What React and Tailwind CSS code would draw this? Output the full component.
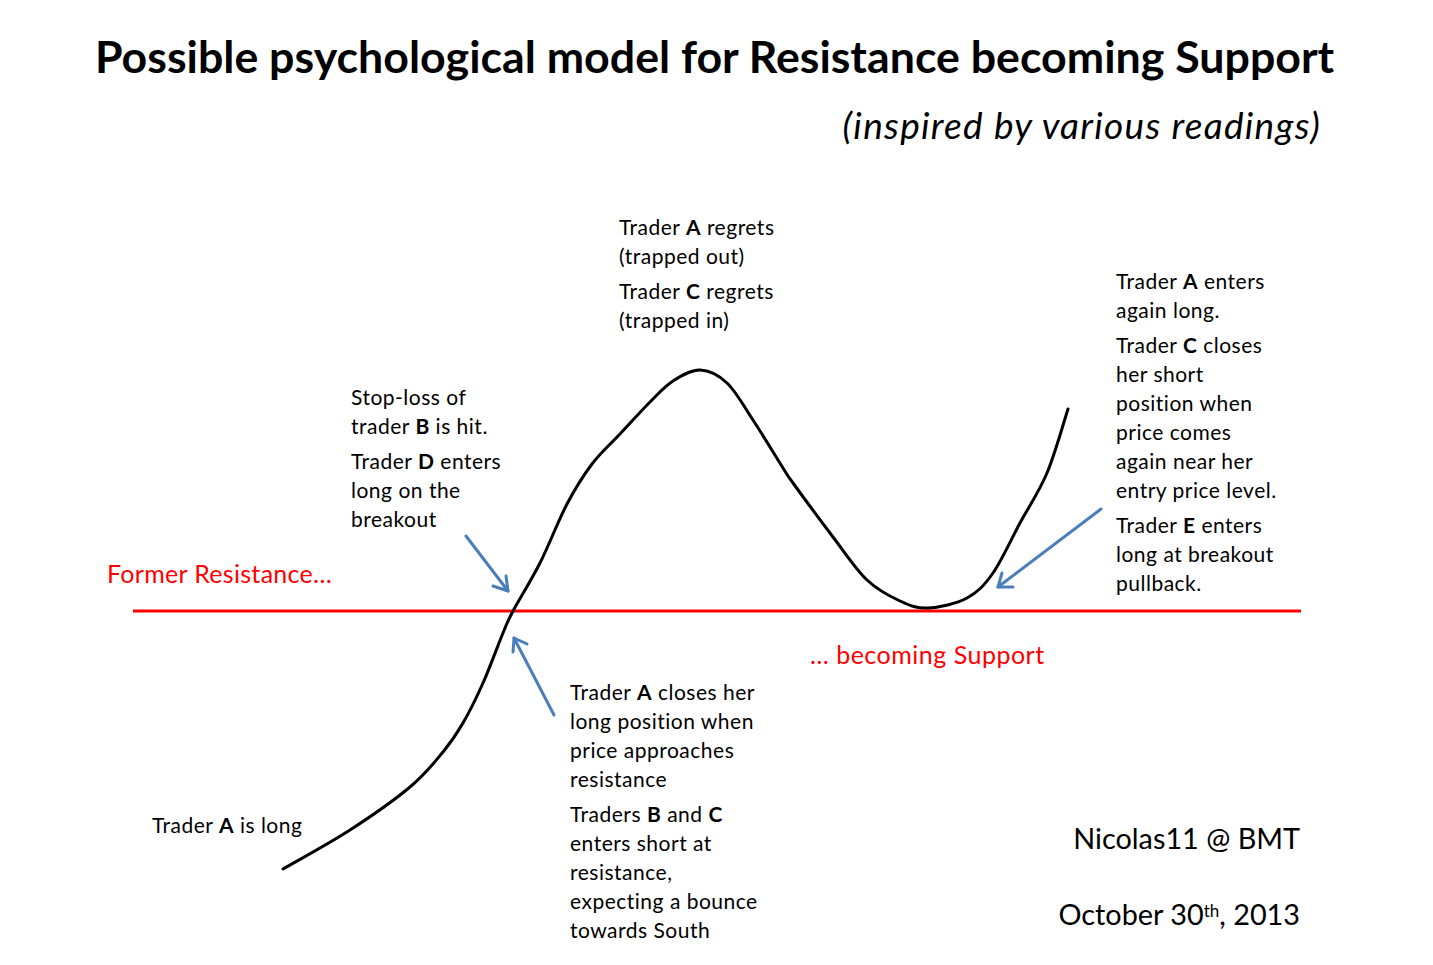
import React from "react";

const PTS = [[283,869],[350,830],[410,787],[443,752],[463,723],[483,683],[503,633],[513,611],[540,563],[567,504],[592,464],[620,434],[650,402],[673,381],[700,370],[727,383],[753,420],[783,468],[793,483],[833,537],[867,580],[900,601],[928,608],[967,598],[993,573],[1020,523],[1047,473],[1068,409]];

function smoothPath(p) {
  let d = `M${p[0][0]},${p[0][1]}`;
  for (let i = 0; i < p.length - 1; i++) {
    const p0 = p[i - 1] || p[i];
    const p1 = p[i];
    const p2 = p[i + 1];
    const p3 = p[i + 2] || p2;
    const c1x = p1[0] + (p2[0] - p0[0]) / 6;
    const c1y = p1[1] + (p2[1] - p0[1]) / 6;
    const c2x = p2[0] - (p3[0] - p1[0]) / 6;
    const c2y = p2[1] - (p3[1] - p1[1]) / 6;
    d += ` C${c1x.toFixed(1)},${c1y.toFixed(1)} ${c2x.toFixed(1)},${c2y.toFixed(1)} ${p2[0]},${p2[1]}`;
  }
  return d;
}

const B = ({ children }) => <span className="font-bold">{children}</span>;

function Block({ className, paras }) {
  return (
    <div className={`absolute flex flex-col gap-[6px] text-[21px] leading-[29px] tracking-[0.5px] text-black whitespace-nowrap ${className}`}>
      {paras.map((lines, i) => (
        <div key={i}>
          {lines.map((l, j) => (
            <div key={j}>{l}</div>
          ))}
        </div>
      ))}
    </div>
  );
}

export default function App() {
  return (
    <div className="relative w-[1433px] h-[965px] bg-white overflow-hidden font-['Lato',sans-serif] text-black">
      <div className="flex flex-col">
        <h1 className="pt-[30px] pl-[95px] text-[44.7px] leading-[52px] font-bold whitespace-nowrap">
          Possible psychological model for Resistance becoming Support
        </h1>
        <div className="pt-[20px] pr-[112px] text-right text-[37px] leading-[46px] tracking-[1.3px] italic whitespace-nowrap">
          (inspired by various readings)
        </div>
      </div>

      <svg className="absolute inset-0 pointer-events-none" width="1433" height="965" viewBox="0 0 1433 965">
        <line x1="133" y1="611" x2="1301" y2="611" stroke="#ff0000" strokeWidth="3" />
        <path d={smoothPath(PTS)} fill="none" stroke="#000" strokeWidth="3" strokeLinecap="round" />
        <g stroke="#4a7ebb" strokeWidth="3" fill="none" strokeLinecap="round" strokeLinejoin="round">
          <line x1="466" y1="536" x2="508" y2="591" />
          <polyline points="493,586 508,591 506,576" />
          <line x1="554" y1="715" x2="514" y2="638" />
          <polyline points="527,644 514,638 513,652" />
          <line x1="1101" y1="509" x2="998" y2="587" />
          <polyline points="1002,573 998,587 1013,587" />
        </g>
      </svg>

      <Block
        className="left-[619px] top-[212px]"
        paras={[
          [<>Trader <B>A</B> regrets</>, "(trapped out)"],
          [<>Trader <B>C</B> regrets</>, "(trapped in)"],
        ]}
      />
      <Block
        className="left-[1116px] top-[266px]"
        paras={[
          [<>Trader <B>A</B> enters</>, "again long."],
          [<>Trader <B>C</B> closes</>, "her short", "position when", "price comes", "again near her", "entry price level."],
          [<>Trader <B>E</B> enters</>, "long at breakout", "pullback."],
        ]}
      />
      <Block
        className="left-[351px] top-[382px]"
        paras={[
          ["Stop-loss of", <>trader <B>B</B> is hit.</>],
          [<>Trader <B>D</B> enters</>, "long on the", "breakout"],
        ]}
      />
      <Block
        className="left-[570px] top-[677px]"
        paras={[
          [<>Trader <B>A</B> closes her</>, "long position when", "price approaches", "resistance"],
          [<>Traders <B>B</B> and <B>C</B></>, "enters short at", "resistance,", "expecting a bounce", "towards South"],
        ]}
      />
      <Block
        className="left-[152px] top-[810px]"
        paras={[[<>Trader <B>A</B> is long</>]]}
      />

      <div className="absolute left-[107px] top-[558px] text-[25px] leading-[30px] tracking-[0.3px] text-[#ff0000] whitespace-nowrap">
        Former Resistance…
      </div>
      <div className="absolute left-[810px] top-[639px] text-[25px] leading-[30px] tracking-[0.5px] text-[#ff0000] whitespace-nowrap">
        … becoming Support
      </div>

      <div className="absolute right-[133px] top-[820px] flex flex-col items-end gap-[40px] text-[28.8px] leading-[36px] whitespace-nowrap">
        <div>Nicolas11 @ BMT</div>
        <div>
          October 30<sup className="text-[17px] text-black">th</sup>, 2013
        </div>
      </div>
    </div>
  );
}
